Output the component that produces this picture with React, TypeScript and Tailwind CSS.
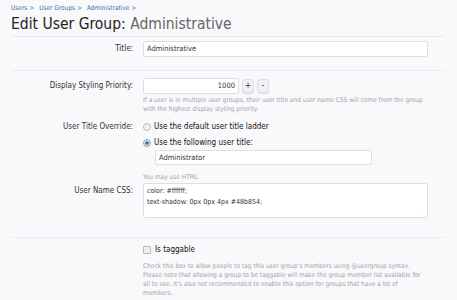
export default function App() {
  return (
    <div className="w-[457px] h-[300px] overflow-hidden bg-[#f9f9fc] text-[#333] font-['DejaVu_Sans_Condensed','DejaVu_Sans',sans-serif]">
      {/* breadcrumb + title */}
      <div className="px-[11px] pt-[3px]">
        <div className="flex gap-[5px] text-[6.5px] leading-[10px] text-[#3c6ea8]">
          <span>Users &gt;</span>
          <span>User Groups &gt;</span>
          <span>Administrative &gt;</span>
        </div>
        <h1 className="text-[15.5px] leading-[20px] text-[#222] mt-[1px]">
          Edit User Group: <span className="text-[#666]">Administrative</span>
        </h1>
      </div>

      <div className="mx-[12px] mt-[2px] border-t border-[#e6ecf3]">
        {/* Title */}
        <div className="flex items-center pt-[4px] pb-[13px] border-b border-[#e6ecf3]">
          <label className="w-[131px] shrink-0 text-right pr-[10px] text-[8px] text-[#333]">Title:</label>
          <div className="w-[285px] h-[16px] bg-white border border-[#dcdfe4] rounded-[2px] px-[3px] text-[7.5px] leading-[14px]">Administrative</div>
        </div>

        {/* Display Styling Priority */}
        <div className="flex pt-[7px]">
          <label className="w-[131px] shrink-0 text-right pr-[10px] text-[8px] leading-[16px]">Display Styling Priority:</label>
          <div className="flex-1">
            <div className="flex items-center gap-[3px]">
              <div className="w-[96px] h-[16px] bg-white border border-[#dcdfe4] rounded-[2px] px-[3px] text-[7.5px] leading-[14px] text-right">1000</div>
              <div className="w-[12px] h-[14px] rounded-[3px] bg-[#eef0f4] border border-[#dde1e7] text-[8px] leading-[12px] text-center shadow-[0_1px_1px_rgba(0,0,0,0.1)]">+</div>
              <div className="w-[12px] h-[14px] rounded-[3px] bg-[#eef0f4] border border-[#dde1e7] text-[8px] leading-[12px] text-center shadow-[0_1px_1px_rgba(0,0,0,0.1)]">-</div>
            </div>
            <p className="mt-[2px] text-[6.5px] leading-[9px] text-[#a3a3a8] pr-[10px]">
              If a user is in multiple user groups, their user title and user name CSS will come from the group
              <br />
              with the highest display styling priority.
            </p>
          </div>
        </div>

        {/* User Title Override */}
        <div className="flex pt-[5px]">
          <label className="w-[131px] shrink-0 text-right pr-[10px] text-[8px] leading-[15px]">User Title Override:</label>
          <div className="flex-1 text-[8px] text-[#111]">
            <div className="flex items-center gap-[3px] h-[15px]">
              <span className="w-[8px] h-[8px] rounded-full border border-[#bbb] bg-[#f2f2f2]"></span>
              <span>Use the default user title ladder</span>
            </div>
            <div className="flex items-center gap-[3px] h-[15px] mt-[1px]">
              <span className="w-[8px] h-[8px] rounded-full border border-[#8aa] bg-[radial-gradient(circle,#4a6f95_35%,#dfe6ee_45%)]"></span>
              <span>Use the following user title:</span>
            </div>
            <div className="ml-[12px] w-[217px] h-[15px] bg-white border border-[#dcdfe4] rounded-[2px] px-[3px] text-[7.5px] leading-[13px] text-[#333]">Administrator</div>
            <p className="mt-[8px] text-[6.5px] text-[#a3a3a8] leading-[9px]">You may use HTML</p>
          </div>
        </div>

        {/* User Name CSS */}
        <div className="flex pt-[1px]">
          <label className="w-[131px] shrink-0 text-right pr-[10px] text-[8px] leading-[16px]">User Name CSS:</label>
          <div className="relative w-[285px] h-[35px] bg-white border border-[#dcdfe4] rounded-[2px] px-[3px] pt-[2px] text-[7px] leading-[11px] text-[#333]">
            <div>color: #ffffff;</div>
            <div>text-shadow: 0px 0px 4px #48b854;</div>
            <span className="absolute right-[3px] bottom-[2px] text-[5px] leading-[5px] text-[#bbb]">⋰</span>
          </div>
        </div>

        <div className="h-[20px] border-b border-[#e6ecf3]"></div>

        {/* Is taggable */}
        <div className="flex pt-[4px]">
          <div className="w-[131px] shrink-0"></div>
          <div className="flex-1">
            <div className="flex items-center gap-[4px] h-[15px] text-[8px] text-[#111]">
              <span className="w-[8px] h-[8px] border border-[#bbb] bg-[#eee] rounded-[1px]"></span>
              <span>Is taggable</span>
            </div>
            <p className="mt-[5px] text-[6.5px] leading-[9px] text-[#a3a3a8] pr-[10px]">
              Check this box to allow people to tag this user group's members using @usergroup syntax.
              <br />
              Please note that allowing a group to be taggable will make the group member list available for
              <br />
              all to see. It's also not recommended to enable this option for groups that have a lot of
              <br />
              members.
            </p>
          </div>
        </div>
      </div>
    </div>
  );
}
